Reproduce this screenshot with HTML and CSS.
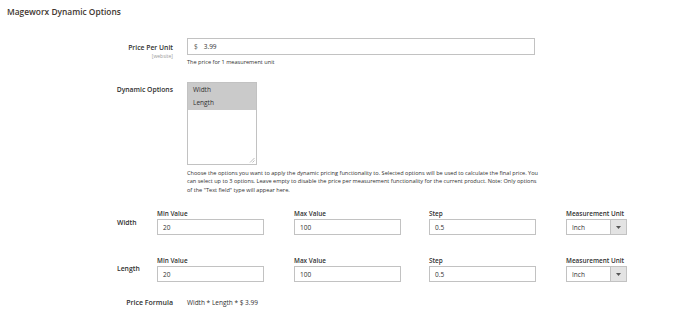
FILE: index.html
```html
<!DOCTYPE html>
<html>
<head>
<meta charset="utf-8">
<link rel="stylesheet" href="styles.css">
</head>
<body>
<div class="page">
  <h2 class="title">Mageworx Dynamic Options</h2>

  <div class="field price-field">
    <div class="label">
      <div class="label-text">Price Per Unit</div>
      <div class="scope">[website]</div>
    </div>
    <div class="control">
      <div class="input price-input"><span class="cur">$</span><span>3.99</span></div>
      <div class="note">The price for 1 measurement unit</div>
    </div>
  </div>

  <div class="field options-field">
    <div class="label">
      <div class="label-text">Dynamic Options</div>
    </div>
    <div class="control">
      <div class="multiselect">
        <div class="opt">Width</div>
        <div class="opt">Length</div>
        <svg class="grip" width="6" height="6" viewBox="0 0 6 6"><path d="M5.5 1 L1 5.5 M5.5 3.5 L3.5 5.5" stroke="#a0a0a0" stroke-width="0.7" fill="none"/></svg>
      </div>
      <div class="note help">Choose the options you want to apply the dynamic pricing functionality to. Selected options will be used to calculate the final price. You can select up to 3 options. Leave empty to disable the price per measurement functionality for the current product. Note: Only options of the "Text field" type will appear here.</div>
    </div>
  </div>

  <div class="dim-row width-row">
    <div class="dim-label">Width</div>
    <div class="dim-fields">
      <div class="dim-field"><div class="dim-title">Min Value</div><div class="input dim-input">20</div></div>
      <div class="dim-field"><div class="dim-title">Max Value</div><div class="input dim-input">100</div></div>
      <div class="dim-field"><div class="dim-title">Step</div><div class="input dim-input">0.5</div></div>
      <div class="dim-field unit"><div class="dim-title">Measurement Unit</div><div class="select"><span class="sel-val">Inch</span><span class="sel-btn"><svg width="5" height="3" viewBox="0 0 5 3"><path d="M0 0 H5 L2.5 3 Z" fill="#555"/></svg></span></div></div>
    </div>
  </div>

  <div class="dim-row length-row">
    <div class="dim-label">Length</div>
    <div class="dim-fields">
      <div class="dim-field"><div class="dim-title">Min Value</div><div class="input dim-input">20</div></div>
      <div class="dim-field"><div class="dim-title">Max Value</div><div class="input dim-input">100</div></div>
      <div class="dim-field"><div class="dim-title">Step</div><div class="input dim-input">0.5</div></div>
      <div class="dim-field unit"><div class="dim-title">Measurement Unit</div><div class="select"><span class="sel-val">Inch</span><span class="sel-btn"><svg width="5" height="3" viewBox="0 0 5 3"><path d="M0 0 H5 L2.5 3 Z" fill="#555"/></svg></span></div></div>
    </div>
  </div>

  <div class="field formula-field">
    <div class="label">
      <div class="label-text">Price Formula</div>
    </div>
    <div class="control formula">Width * Length * $ 3.99</div>
  </div>
</div>
</body>
</html>
```

FILE: styles.css
```css
* { box-sizing: border-box; }
html, body { margin: 0; padding: 0; background: #fff; }
body {
  font-family: "Open Sans", "Noto Sans", sans-serif;
  color: #303030;
  width: 685px;
  height: 334px;
  overflow: hidden;
}
.page { padding: 6px 0 0 0; }
.title {
  margin: 0 0 0 7px;
  font-size: 8.4px;
  font-weight: 600;
  color: #41362f;
  line-height: 12px;
}
.field { display: flex; }
.label {
  width: 187px;
  padding-right: 14px;
  text-align: right;
  flex: none;
}
.label-text {
  font-size: 6.8px;
  font-weight: 600;
  color: #303030;
  line-height: 10px;
}
.scope {
  font-size: 5px;
  color: #999;
  line-height: 6px;
}
.control { flex: none; }
.price-field { margin-top: 20px; }
.price-field .label { padding-top: 5px; }
.input {
  border: 1px solid #c2c2c2;
  background: #fff;
  font-size: 6.5px;
  color: #303030;
  display: flex;
  align-items: center;
}
.price-input {
  width: 348px;
  height: 17px;
  padding-left: 6px;
}
.cur { margin-right: 6px; color: #555; }
.note {
  font-size: 5.6px;
  color: #303030;
  line-height: 8.5px;
  margin-top: 3px;
}
.options-field { margin-top: 15px; }
.options-field .label { padding-top: 3px; }
.multiselect {
  position: relative;
  width: 70px;
  height: 83px;
  border: 1px solid #c2c2c2;
  background: #fff;
}
.opt {
  background: #cacaca;
  font-size: 6.5px;
  color: #303030;
  line-height: 13.5px;
  padding-left: 5px;
}
.grip { position: absolute; right: 1px; bottom: 1px; }
.help {
  width: 356px;
  margin-top: 4px;
  line-height: 8.5px;
}
.dim-row { display: flex; }
.width-row { margin-top: 15px; }
.length-row { margin-top: 21px; }
.dim-label {
  width: 157px;
  padding-left: 117px;
  flex: none;
  font-size: 6.8px;
  font-weight: 600;
  padding-top: 9px;
  line-height: 10px;
}
.length-row .dim-label { padding-top: 8px; }
.dim-fields { display: flex; gap: 30px; }
.dim-field { width: 107px; }
.dim-field:nth-child(3) { margin-left: -2px; }
.dim-title {
  font-size: 6.4px;
  font-weight: 600;
  line-height: 9px;
  margin-bottom: 1px;
  color: #303030;
}
.dim-input {
  width: 107px;
  height: 16px;
  padding-left: 5px;
}
.unit { width: 61px; }
.select {
  display: flex;
  width: 61px;
  height: 16px;
  border: 1px solid #c2c2c2;
  background: #fff;
}
.sel-val {
  flex: 1;
  font-size: 6.5px;
  padding-left: 5px;
  display: flex;
  align-items: center;
}
.sel-btn {
  width: 16px;
  background: #e3e3e3;
  border-left: 1px solid #c2c2c2;
  display: flex;
  align-items: center;
  justify-content: center;
}
.formula-field { margin-top: 16px; }
.formula-field .label-text { font-size: 7px; }
.formula {
  font-size: 6.5px;
  color: #303030;
  line-height: 10px;
}
```
